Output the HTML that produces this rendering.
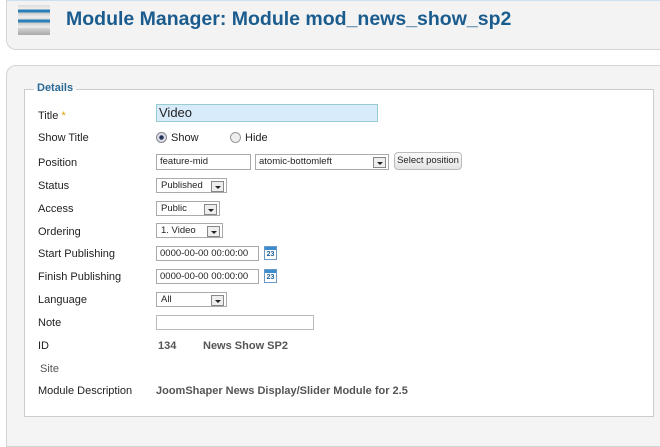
<!DOCTYPE html>
<html><head><style>
body{margin:0;width:660px;height:430px;background:#fff;position:relative;overflow:hidden;font-family:"Liberation Sans",Arial,sans-serif;font-size:11px;color:#222}
.a{position:absolute}
.hdr{left:6px;top:-2px;width:670px;height:48px;background:#f3f3f3;border:1px solid #d4d4d4;border-radius:0 0 0 10px;border-top:3px solid #cfe0f0}
.pnl{left:6px;top:65px;width:670px;height:380px;background:#f4f4f4;border:1px solid #d4d4d4;border-radius:10px 0 0 0}
.fs{left:24px;top:89px;width:628px;height:326px;background:#fff;border:1px solid #ccc}
.lbl{left:38px;font-size:11px;color:#222}
.inp{background:#fff;border:1px solid #aaa;font-size:9.5px;line-height:14px;padding-left:3px;box-sizing:border-box;height:16px}
.sel{background:#fff;border:1px solid #aaa;box-sizing:border-box;height:15px;font-size:9.5px;line-height:13px;padding-left:4px}
.arr{position:absolute;right:2px;top:2px;width:11px;height:9px;border:1px solid #888;background:#eee}
.arr:after{content:"";position:absolute;left:3px;top:4px;border-left:3px solid transparent;border-right:3px solid transparent;border-top:3px solid #222}
.cal{width:13px;height:14px;background:#fff;border:1px solid #6a9ac4;box-sizing:border-box;font-size:7px;font-weight:bold;color:#1d5f99;text-align:center;line-height:15px}
.cal:before{content:"";position:absolute;left:0;top:0;width:11px;height:3px;background:#3c8dd0}
.g{color:#555}
</style></head><body>
<div class="a hdr"></div>
<div class="a" style="left:18px;top:5px;width:32px;height:30px;background:linear-gradient(#ddd 0,#eee 4px,#2a7fb8 5px,#2a7fb8 7px,#ccc 8px,#eee 12px,#ddd 14px,#2a7fb8 15px,#2a7fb8 17px,#ccc 18px,#eee 22px,#ccc 24px,#aaa 30px)"></div>
<div class="a" style="left:66px;top:8px;font-size:19.5px;font-weight:bold;color:#1b5c8e">Module Manager: Module mod_news_show_sp2</div>
<div class="a pnl"></div>
<div class="a fs"></div>
<div class="a" style="left:34px;top:82px;padding:0 3px;font-weight:bold;color:#2b6a96;font-size:11px;background:linear-gradient(#f4f4f4 7px,#fff 7px)">Details</div>

<div class="a lbl" style="top:110px">Title <span style="color:#e0a000">*</span></div>
<div class="a" style="left:156px;top:104px;width:222px;height:18px;background:#d7ebfa;border:1px solid #9cc;box-sizing:border-box;font-size:13px;line-height:16px;padding-left:2px">Video</div>

<div class="a lbl" style="top:132px">Show Title</div>
<div class="a" style="left:156px;top:132px;width:9px;height:9px;border-radius:50%;border:1px solid #888;background:radial-gradient(#235 30%,#dde 40%)"></div>
<div class="a" style="left:171px;top:132px">Show</div>
<div class="a" style="left:230px;top:132px;width:9px;height:9px;border-radius:50%;border:1px solid #999;background:#eee"></div>
<div class="a" style="left:245px;top:132px">Hide</div>

<div class="a lbl" style="top:157px">Position</div>
<div class="a inp" style="left:156px;top:154px;width:95px">feature-mid</div>
<div class="a inp" style="left:255px;top:154px;width:134px">atomic-bottomleft<span class="arr"></span></div>
<div class="a" style="left:394px;top:152px;width:68px;height:18px;border:1px solid #bbb;border-radius:4px;background:linear-gradient(#fafafa,#e4e4e4);box-sizing:border-box;font-size:9.5px;text-align:center;line-height:16px">Select position</div>

<div class="a lbl" style="top:180px">Status</div>
<div class="a sel" style="left:156px;top:178px;width:71px">Published<span class="arr"></span></div>
<div class="a lbl" style="top:203px">Access</div>
<div class="a sel" style="left:156px;top:201px;width:64px">Public<span class="arr"></span></div>
<div class="a lbl" style="top:226px">Ordering</div>
<div class="a sel" style="left:156px;top:223px;width:67px">1. Video<span class="arr"></span></div>
<div class="a lbl" style="top:248px">Start Publishing</div>
<div class="a inp" style="left:156px;top:246px;width:103px;height:15px">0000-00-00 00:00:00</div>
<div class="a cal" style="left:264px;top:246px">23</div>
<div class="a lbl" style="top:271px">Finish Publishing</div>
<div class="a inp" style="left:156px;top:269px;width:103px;height:15px">0000-00-00 00:00:00</div>
<div class="a cal" style="left:264px;top:269px">23</div>
<div class="a lbl" style="top:294px">Language</div>
<div class="a sel" style="left:156px;top:292px;width:71px">All<span class="arr"></span></div>
<div class="a lbl" style="top:317px">Note</div>
<div class="a inp" style="left:156px;top:315px;width:158px;height:15px;border-color:#bbb"></div>
<div class="a lbl" style="top:340px">ID</div>
<div class="a g" style="left:158px;top:340px;font-weight:bold">134</div>
<div class="a g" style="left:203px;top:340px;font-weight:bold">News Show SP2</div>
<div class="a g" style="left:40px;top:363px">Site</div>
<div class="a lbl" style="top:385px">Module Description</div>
<div class="a g" style="left:156px;top:385px;font-weight:bold">JoomShaper News Display/Slider Module for 2.5</div>
</body></html>
